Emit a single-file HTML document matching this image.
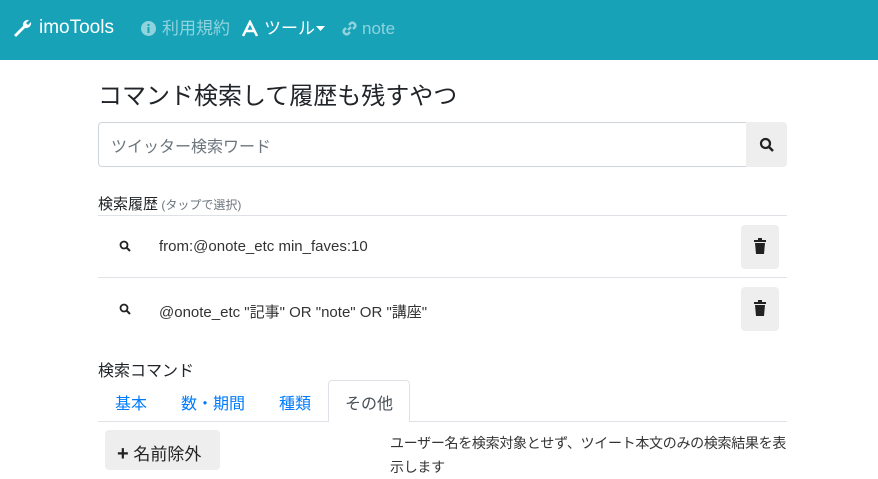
<!DOCTYPE html><html><head><meta charset="utf-8"><style>
*{box-sizing:border-box}body{margin:0;width:878px;height:460px;overflow:hidden;font-family:"Liberation Sans","Noto Sans CJK JP",sans-serif;color:#212529;background:#fff}
.nav{height:60px;background:#17a2b8;position:relative;color:#fff}
.nav span{position:absolute;top:17px;font-size:17px;line-height:24px}
.a{position:absolute}
.row{position:absolute;left:98px;width:689px;border-top:1px solid #dee2e6}
.btn{position:absolute;background:#eeeeee;border-radius:4px}
</style></head><body>
<div class="nav">
<svg class="a" style="left:11px;top:18px" width="22" height="20" viewBox="0 0 22 20"><path d="M3 17 L12 8 A5 5 0 0 1 18 2 L15 5 L17 7 L20 4 A5 5 0 0 1 14 10 L5 19 Z" fill="#fff"/></svg>
<span style="left:39px;font-size:19px;top:16px">imoTools</span>
<svg class="a" style="left:141px;top:21px" width="15" height="15"><circle cx="7.5" cy="7.5" r="7.5" fill="#8fd3dd"/><rect x="6.5" y="6" width="2" height="6" fill="#17a2b8"/><rect x="6.5" y="3" width="2" height="2" fill="#17a2b8"/></svg>
<span style="left:162px;color:#8fd3dd;top:17px">利用規約</span>
<svg class="a" style="left:241px;top:20px" width="18" height="17"><path d="M2 16 L9 2 L16 16 M4 11 H14" stroke="#fff" stroke-width="2.5" fill="none"/></svg>
<span style="left:264px;top:17px">ツール</span>
<svg class="a" style="left:316px;top:26px" width="9" height="6"><path d="M0 0 H9 L4.5 5Z" fill="#fff"/></svg>
<svg class="a" style="left:341px;top:20px" width="17" height="17"><path d="M7 10 L10 7 M5 8 L3 10 A3 3 0 0 0 7 14 L9 12 M12 9 L14 7 A3 3 0 0 0 10 3 L8 5" stroke="#8fd3dd" stroke-width="2.5" fill="none"/></svg>
<span style="left:362px;color:#8fd3dd;top:17px">note</span>
</div>
<div class="a" style="left:98px;top:76px;font-size:24px">コマンド検索して履歴も残すやつ</div>
<div class="a" style="left:98px;top:122px;width:649px;height:45px;border:1px solid #ced4da;border-radius:4px 0 0 4px;font-size:16px;color:#6c757d;padding:10px 12px">ツイッター検索ワード</div>
<div class="a" style="left:746px;top:122px;width:41px;height:45px;background:#eee;border-radius:0 4px 4px 0"></div>
<svg class="a" style="left:759px;top:137px" width="16" height="16"><circle cx="6.5" cy="6.5" r="4.5" stroke="#222" stroke-width="2.2" fill="none"/><path d="M10 10 L14 14" stroke="#222" stroke-width="2.5"/></svg>
<div class="a" style="left:98px;top:193px;font-size:15px">検索履歴<span style="font-size:12px;color:#6c757d"> (タップで選択)</span></div>
<div class="row" style="top:215px;height:62px"></div>
<div class="row" style="top:277px;height:62px"></div>
<svg class="a" style="left:119px;top:240px" width="12" height="12"><circle cx="5" cy="5" r="3.5" stroke="#222" stroke-width="1.8" fill="none"/><path d="M7.5 7.5 L11 11" stroke="#222" stroke-width="2"/></svg>
<div class="a" style="left:159px;top:238px;font-size:15px;color:#333">from:@onote_etc min_faves:10</div>
<svg class="a" style="left:119px;top:303px" width="12" height="12"><circle cx="5" cy="5" r="3.5" stroke="#222" stroke-width="1.8" fill="none"/><path d="M7.5 7.5 L11 11" stroke="#222" stroke-width="2"/></svg>
<div class="a" style="left:159px;top:301px;font-size:15px;color:#333">@onote_etc "記事" OR "note" OR "講座"</div>
<div class="btn" style="left:741px;top:225px;width:38px;height:44px"></div>
<div class="btn" style="left:741px;top:287px;width:38px;height:44px"></div>
<svg class="a" style="left:754px;top:238px" width="12" height="16"><rect x="0" y="2" width="12" height="2" fill="#222"/><rect x="4" y="0" width="4" height="2" fill="#222"/><path d="M1 5 H11 L10 16 H2Z" fill="#222"/></svg>
<svg class="a" style="left:754px;top:300px" width="12" height="16"><rect x="0" y="2" width="12" height="2" fill="#222"/><rect x="4" y="0" width="4" height="2" fill="#222"/><path d="M1 5 H11 L10 16 H2Z" fill="#222"/></svg>
<div class="a" style="left:98px;top:357px;font-size:16px">検索コマンド</div>
<div class="a" style="left:98px;top:421px;width:689px;border-top:1px solid #dee2e6"></div>
<div class="a" style="left:328px;top:380px;width:82px;height:42px;border:1px solid #dee2e6;border-bottom:none;border-radius:4px 4px 0 0;background:#fff"></div>
<div class="a" style="left:115px;top:390px;font-size:16px;color:#007bff">基本</div>
<div class="a" style="left:181px;top:390px;font-size:16px;color:#007bff">数・期間</div>
<div class="a" style="left:279px;top:390px;font-size:16px;color:#007bff">種類</div>
<div class="a" style="left:345px;top:390px;font-size:16px;color:#495057">その他</div>
<div class="btn" style="left:105px;top:430px;width:115px;height:40px"></div>
<div class="a" style="left:117px;top:440px;font-size:17px;color:#222"><b style="font-size:20px">+</b> 名前除外</div>
<div class="a" style="left:390px;top:431px;width:400px;font-size:14px;color:#333;line-height:24px;letter-spacing:-0.3px">ユーザー名を検索対象とせず、ツイート本文のみの検索結果を表示します</div>
</body></html>
